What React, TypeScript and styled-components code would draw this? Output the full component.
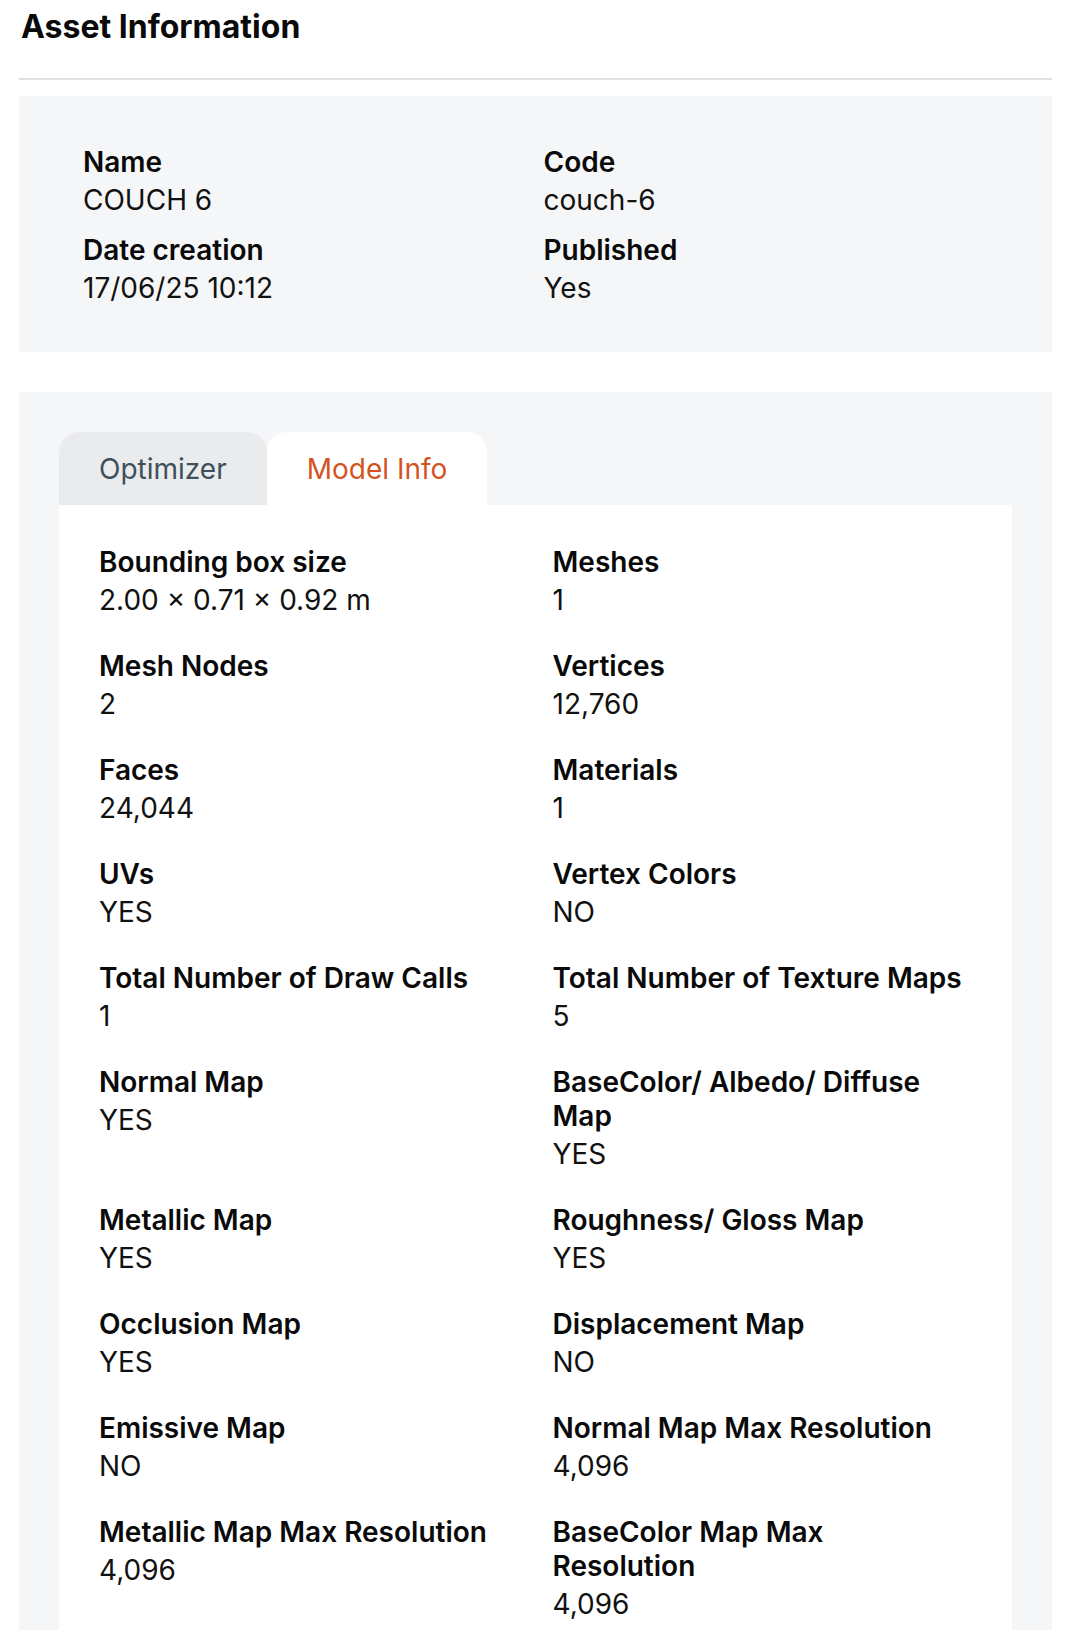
import React, { useState } from 'react'
import styled, { createGlobalStyle } from 'styled-components'

const GlobalStyle = createGlobalStyle`
  html, body {
    margin: 0;
    padding: 0;
    background: #ffffff;
  }
  body {
    font-family: Inter, "Noto Sans", "Liberation Sans", sans-serif;
    color: #0d0d0d;
  }
  * {
    box-sizing: border-box;
  }
`

const Page = styled.div`
  padding: 0 16px 0 19px;
`

const Title = styled.h2`
  margin: 0;
  padding: 7px 0 31px 2px;
  font-size: 32px;
  line-height: 40px;
  font-weight: 700;
  color: #0a0a0a;
  border-bottom: 2px solid #dde1e5;
`

const Panel = styled.section<{ $gap?: number }>`
  background: #f5f6f8;
  margin-top: ${({ $gap }) => $gap ?? 0}px;
`

const SummaryPanel = styled(Panel)`
  padding: 49px 64px 47px;
`

const TabsPanel = styled(Panel)`
  padding: 40px 40px 0;
`

const Grid = styled.dl<{ $rowGap: number; $colGap: number }>`
  margin: 0;
  display: grid;
  grid-template-columns: 1fr 1fr;
  column-gap: ${({ $colGap }) => $colGap}px;
  row-gap: ${({ $rowGap }) => $rowGap}px;
`

const Field = styled.div`
  display: flex;
  flex-direction: column;
`

const Label = styled.dt`
  font-size: 28px;
  line-height: 34px;
  font-weight: 600;
  color: #0a0a0a;
  margin-bottom: 4px;
`

const Value = styled.dd`
  margin: 0;
  font-size: 28px;
  line-height: 34px;
  font-weight: 400;
  color: #111111;
`

const TabList = styled.div`
  display: flex;
`

const Tab = styled.button<{ $active?: boolean }>`
  border: none;
  margin: 0;
  cursor: pointer;
  height: 73px;
  padding: 0 40px;
  border-radius: 20px 20px 0 0;
  font-family: inherit;
  font-size: 28px;
  font-weight: 400;
  background: ${({ $active }) => ($active ? '#ffffff' : '#e9ebed')};
  color: ${({ $active }) => ($active ? '#d4541f' : '#3e505b')};
`

const TabBody = styled.div`
  background: #ffffff;
  padding: 40px 40px 48px;
`

type Item = { label: string; value: string }

const summary: Item[] = [
  { label: 'Name', value: 'COUCH 6' },
  { label: 'Code', value: 'couch-6' },
  { label: 'Date creation', value: '17/06/25 10:12' },
  { label: 'Published', value: 'Yes' },
]

const modelInfo: Item[] = [
  { label: 'Bounding box size', value: '2.00 × 0.71 × 0.92 m' },
  { label: 'Meshes', value: '1' },
  { label: 'Mesh Nodes', value: '2' },
  { label: 'Vertices', value: '12,760' },
  { label: 'Faces', value: '24,044' },
  { label: 'Materials', value: '1' },
  { label: 'UVs', value: 'YES' },
  { label: 'Vertex Colors', value: 'NO' },
  { label: 'Total Number of Draw Calls', value: '1' },
  { label: 'Total Number of Texture Maps', value: '5' },
  { label: 'Normal Map', value: 'YES' },
  { label: 'BaseColor/ Albedo/ Diffuse Map', value: 'YES' },
  { label: 'Metallic Map', value: 'YES' },
  { label: 'Roughness/ Gloss Map', value: 'YES' },
  { label: 'Occlusion Map', value: 'YES' },
  { label: 'Displacement Map', value: 'NO' },
  { label: 'Emissive Map', value: 'NO' },
  { label: 'Normal Map Max Resolution', value: '4,096' },
  { label: 'Metallic Map Max Resolution', value: '4,096' },
  { label: 'BaseColor Map Max Resolution', value: '4,096' },
]

const Fields = ({ items }: { items: Item[] }) => (
  <>
    {items.map((item) => (
      <Field key={item.label}>
        <Label>{item.label}</Label>
        <Value>{item.value}</Value>
      </Field>
    ))}
  </>
)

export default function App() {
  const [tab, setTab] = useState('model')

  return (
    <Page>
      <GlobalStyle />
      <Title>Asset Information</Title>

      <SummaryPanel $gap={16}>
        <Grid $rowGap={16} $colGap={16}>
          <Fields items={summary} />
        </Grid>
      </SummaryPanel>

      <TabsPanel $gap={40}>
        <TabList>
          <Tab $active={tab === 'optimizer'} onClick={() => setTab('optimizer')}>Optimizer</Tab>
          <Tab $active={tab === 'model'} onClick={() => setTab('model')}>Model Info</Tab>
        </TabList>
        <TabBody>
          <Grid $rowGap={32} $colGap={34}>
            <Fields items={modelInfo} />
          </Grid>
        </TabBody>
      </TabsPanel>
    </Page>
  )
}
